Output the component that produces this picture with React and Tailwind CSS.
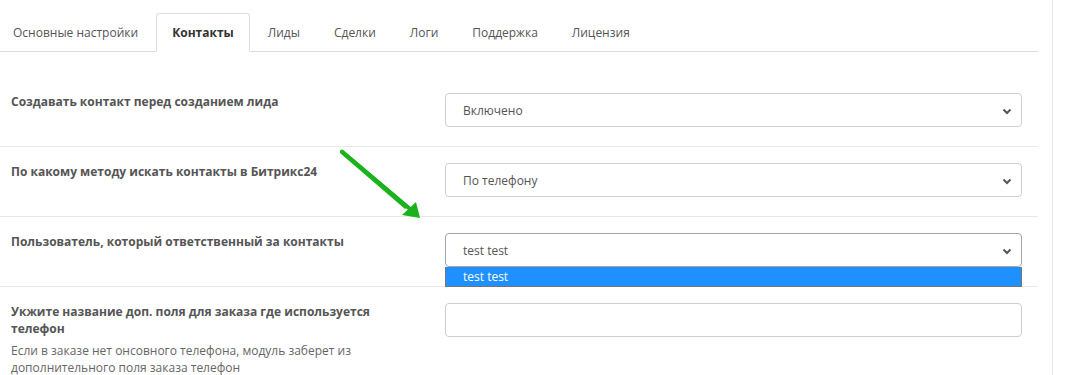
import React from 'react';

const tabs = ['Основные настройки', 'Контакты', 'Лиды', 'Сделки', 'Логи', 'Поддержка', 'Лицензия'];

const Chevron = () => (
    <svg width="10" height="7" viewBox="0 0 10 7" className="shrink-0">
        <polyline points="1.5,1.5 5,5 8.5,1.5" fill="none" stroke="#555" strokeWidth="2" />
    </svg>
);

const FakeSelect = ({ value, open }) => (
    <div className="relative w-[577px]">
        <div
            className={`h-[34px] flex items-center justify-between pl-[17px] pr-[9px] pt-[2px] bg-white rounded-[4px] border text-[12px] text-[#555] ${open ? 'border-[#a5a5a5]' : 'border-[#cfcfcf]'}`}
        >
            <span>{value}</span>
            <Chevron />
        </div>
        {open && (
            <div className="absolute left-0 top-full w-full h-[20px] flex items-center pl-[17px] bg-[#1e90ff] border border-t-0 border-[#767676] text-[12px] text-white z-10">
                {value}
            </div>
        )}
    </div>
);

const Row = ({ label, hint, first, children }) => (
    <div className={`flex pt-4 pb-[19px] ${first ? '' : 'border-t border-[#e8e8e8]'}`}>
        <div className="w-[445px] shrink-0 pl-[11px]">
            <div className="w-[395px] text-[12px] leading-[17px] font-bold text-[#555]">{label}</div>
            {hint && <div className="w-[395px] mt-[5px] text-[12px] leading-[17px] text-[#666]">{hint}</div>}
        </div>
        {children}
    </div>
);

export default function App() {
    return (
        <div className="relative flex bg-white h-[375px] overflow-hidden font-['Open_Sans',sans-serif]">
            <div className="w-[1053px] shrink-0 border-r border-[#e6e6e6]">
                <div className="w-[1038px]">
                    {/* Tabs */}
                    <div className="flex pt-[13px] border-b border-[#dddddd]">
                        {tabs.map((t, i) => {
                            const active = i === 1;
                            return (
                                <div
                                    key={t}
                                    className={`-mb-px h-[39px] flex items-center mr-[2px] text-[12px] rounded-t-[3px] border ${i === 0 ? 'pl-3 pr-[15px]' : 'px-[15px]'} ${active ? 'border-[#dddddd] border-b-white font-bold text-[#333]' : 'border-transparent text-[#555]'}`}
                                >
                                    {t}
                                </div>
                            );
                        })}
                    </div>

                    {/* Settings */}
                    <div className="pt-[25px]">
                        <Row first label="Создавать контакт перед созданием лида">
                            <FakeSelect value="Включено" />
                        </Row>
                        <Row label="По какому методу искать контакты в Битрикс24">
                            <FakeSelect value="По телефону" />
                        </Row>
                        <Row label="Пользователь, который ответственный за контакты">
                            <FakeSelect value="test test" open />
                        </Row>
                        <Row
                            label="Укжите название доп. поля для заказа где используется телефон"
                            hint="Если в заказе нет онсовного телефона, модуль заберет из дополнительного поля заказа телефон"
                        >
                            <div className="w-[577px] h-[34px] bg-white rounded-[4px] border border-[#cfcfcf]"></div>
                        </Row>
                    </div>
                </div>
            </div>

            {/* Green annotation arrow */}
            <svg className="absolute left-0 top-0 pointer-events-none" width="1069" height="375">
                <path d="M341 150 L344 151 L409 206 L405 209 L340 153 Z" fill="#1bb31b" />
                <path d="M420 218 L402 215 L416 202 Z" fill="#1bb31b" />
                <line x1="342" y1="151.5" x2="410" y2="209" stroke="#1bb31b" strokeWidth="4" strokeLinecap="round" />
            </svg>
        </div>
    );
}
